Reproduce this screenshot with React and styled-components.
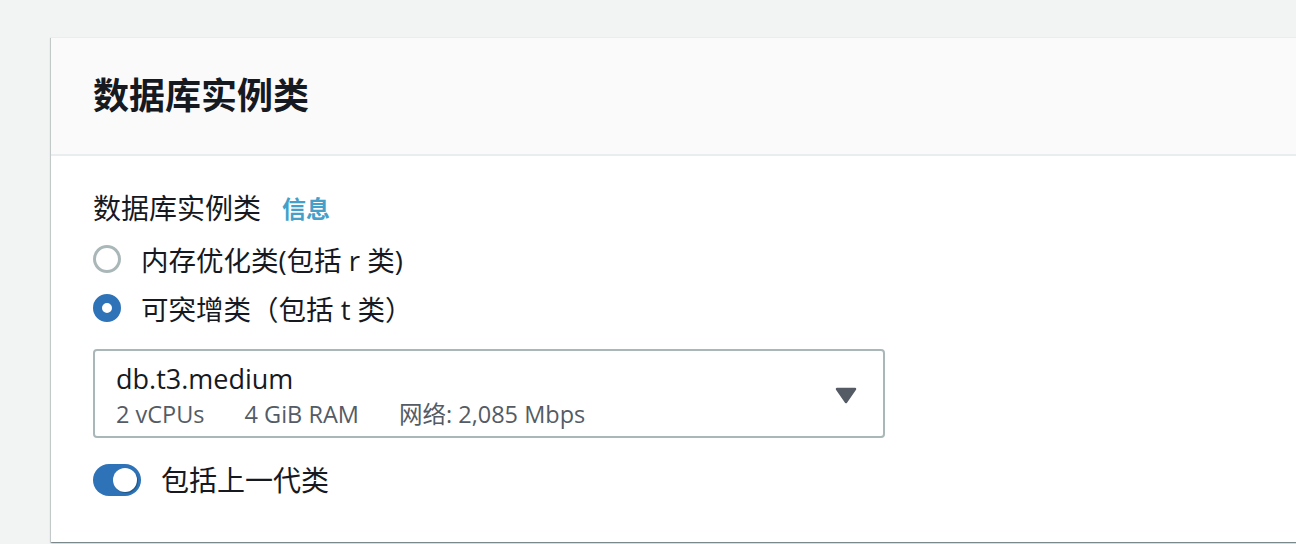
import React from "react";
import styled, { createGlobalStyle } from "styled-components";

const Global = createGlobalStyle`
  html, body { margin: 0; padding: 0; background: #f2f3f3; }
  body { font-family: "Open Sans", "Noto Sans CJK SC", sans-serif; color: #16191f; }
  * { box-sizing: border-box; }
`;

const Page = styled.div`
  width: 1296px;
  height: 544px;
  overflow: hidden;
  padding: 37px 0 0 51px;
`;

const Card = styled.section`
  width: 1300px;
  background: #ffffff;
  box-shadow: 0 1px 1px 0 rgba(0, 28, 36, 0.3), 1px 1px 1px 0 rgba(0, 28, 36, 0.15),
    -1px 1px 1px 0 rgba(0, 28, 36, 0.15);
  border-top: 1px solid #eaeded;
`;

const Header = styled.header`
  height: 118px;
  background: #fafafa;
  border-bottom: 2px solid #eaeded;
  display: flex;
  align-items: center;
  padding-left: 42px;
`;

const Title = styled.h2`
  margin: 0;
  font-size: 36px;
  font-weight: 700;
  line-height: 44px;
  color: #16191f;
`;

const Body = styled.div`
  padding: 31px 42px 42px;
  display: flex;
  flex-direction: column;
  align-items: flex-start;
`;

const LabelRow = styled.div`
  display: flex;
  align-items: center;
  gap: 21px;
  height: 40px;
  font-size: 28px;
`;

const InfoLink = styled.a`
  font-size: 24px;
  font-weight: 700;
  color: #44a0c9;
  text-decoration: none;
`;

const RadioGroup = styled.div`
  margin-top: 7px;
  display: flex;
  flex-direction: column;
`;

const RadioRow = styled.label`
  display: flex;
  align-items: center;
  gap: 20px;
  height: 49px;
  font-size: 27.5px;
  color: #16191f;
`;

const RadioCircle = styled.span`
  width: 28px;
  height: 28px;
  border-radius: 50%;
  border: ${(p) => (p.$checked ? "9px solid #2e73b8" : "3px solid #aab7b8")};
  background: #fff;
  flex-shrink: 0;
`;

const Select = styled.div`
  margin-top: 17px;
  width: 792px;
  height: 89px;
  border: 2px solid #aab7b8;
  border-radius: 4px;
  display: flex;
  align-items: center;
  justify-content: space-between;
  padding: 4px 26px 0 21px;
`;

const SelectText = styled.div`
  display: flex;
  flex-direction: column;
`;

const Primary = styled.div`
  font-size: 27px;
  line-height: 36px;
  color: #16191f;
`;

const Secondary = styled.div`
  display: flex;
  gap: 40px;
  font-size: 23.5px;
  line-height: 34px;
  color: #545b64;
`;

const Caret = styled.svg`
  width: 22px;
  height: 17px;
  display: block;
`;

const ToggleRow = styled.label`
  margin-top: 22px;
  height: 40px;
  display: flex;
  align-items: center;
  gap: 20px;
  font-size: 28px;
  line-height: 40px;
  color: #16191f;
`;

const Track = styled.span`
  width: 48px;
  height: 32px;
  border-radius: 16px;
  background: #2e73b8;
  display: flex;
  align-items: center;
  justify-content: ${(p) => (p.$on ? "flex-end" : "flex-start")};
  padding: 0 4px;
`;

const Knob = styled.span`
  width: 24px;
  height: 24px;
  border-radius: 50%;
  background: #fff;
  box-shadow: 1px 1px 1px rgba(0, 28, 36, 0.35);
`;

export default function App() {
  return (
    <>
      <Global />
      <Page>
        <Card>
          <Header>
            <Title>数据库实例类</Title>
          </Header>
          <Body>
            <LabelRow>
              <span>数据库实例类</span>
              <InfoLink>信息</InfoLink>
            </LabelRow>
            <RadioGroup>
              <RadioRow>
                <RadioCircle />
                <span>内存优化类(包括 r 类)</span>
              </RadioRow>
              <RadioRow>
                <RadioCircle $checked />
                <span>可突增类（包括 t 类）</span>
              </RadioRow>
            </RadioGroup>
            <Select>
              <SelectText>
                <Primary>db.t3.medium</Primary>
                <Secondary>
                  <span>2 vCPUs</span>
                  <span>4 GiB RAM</span>
                  <span>网络: 2,085 Mbps</span>
                </Secondary>
              </SelectText>
              <Caret viewBox="0 0 22 17">
                <path d="M2 2 L20 2 L11 15 Z" fill="#545b64" stroke="#545b64" strokeWidth="2.5" strokeLinejoin="round" />
              </Caret>
            </Select>
            <ToggleRow>
              <Track $on>
                <Knob />
              </Track>
              <span>包括上一代类</span>
            </ToggleRow>
          </Body>
        </Card>
      </Page>
    </>
  );
}
